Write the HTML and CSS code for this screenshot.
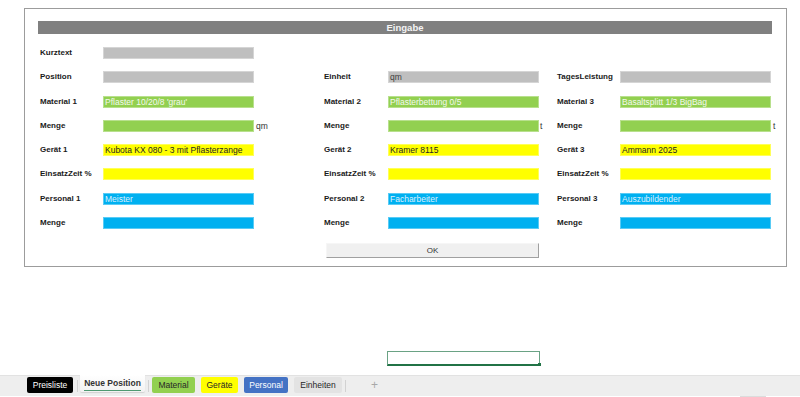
FILE: index.html
```html
<!DOCTYPE html>
<html lang="de">
<head>
<meta charset="utf-8">
<title>Eingabe</title>
<link rel="stylesheet" href="styles.css">
</head>
<body>
<div class="sheet">
  <div class="frame">
    <div class="titlebar">Eingabe</div>
    <div class="form">
      <div class="lbl">Kurztext</div><div class="fld gray"></div><div></div><div></div><div></div><div></div><div></div><div></div><div></div>

      <div class="lbl">Position</div><div class="fld gray"></div><div></div>
      <div class="lbl">Einheit</div><div class="fld gray dark">qm</div><div></div>
      <div class="lbl">TagesLeistung</div><div class="fld gray"></div><div></div>

      <div class="lbl">Material 1</div><div class="fld green">Pflaster 10/20/8 'grau'</div><div></div>
      <div class="lbl">Material 2</div><div class="fld green">Pflasterbettung 0/5</div><div></div>
      <div class="lbl">Material 3</div><div class="fld green">Basaltsplitt 1/3 BigBag</div><div></div>

      <div class="lbl">Menge</div><div class="fld green"></div><div class="unit">qm</div>
      <div class="lbl">Menge</div><div class="fld green"></div><div class="unit u1">t</div>
      <div class="lbl">Menge</div><div class="fld green"></div><div class="unit u2">t</div>

      <div class="lbl">Gerät 1</div><div class="fld yellow">Kubota KX 080 - 3 mit Pflasterzange</div><div></div>
      <div class="lbl">Gerät 2</div><div class="fld yellow">Kramer 8115</div><div></div>
      <div class="lbl">Gerät 3</div><div class="fld yellow">Ammann 2025</div><div></div>

      <div class="lbl">EinsatzZeit %</div><div class="fld yellow"></div><div></div>
      <div class="lbl">EinsatzZeit %</div><div class="fld yellow"></div><div></div>
      <div class="lbl">EinsatzZeit %</div><div class="fld yellow"></div><div></div>

      <div class="lbl">Personal 1</div><div class="fld blue">Meister</div><div></div>
      <div class="lbl">Personal 2</div><div class="fld blue">Facharbeiter</div><div></div>
      <div class="lbl">Personal 3</div><div class="fld blue">Auszubildender</div><div></div>

      <div class="lbl">Menge</div><div class="fld blue"></div><div></div>
      <div class="lbl">Menge</div><div class="fld blue"></div><div></div>
      <div class="lbl">Menge</div><div class="fld blue"></div><div></div>
    </div>
    <div class="btn">OK</div>
  </div>
  <div class="cell"><span class="handle"></span></div>
</div>
<div class="tabbar">
  <div class="tab t-black">Preisliste</div>
  <div class="sep"></div>
  <div class="tab t-active">Neue Position</div>
  <div class="sep"></div>
  <div class="tab t-green">Material</div>
  <div class="tab t-yellow">Geräte</div>
  <div class="tab t-blue">Personal</div>
  <div class="tab t-gray">Einheiten</div>
  <div class="sep"></div>
  <div class="plus">+</div>
</div>
<div class="bottom"><div class="thumb"></div></div>
</body>
</html>
```

FILE: styles.css
```css
* { box-sizing: border-box; }
html, body { margin: 0; padding: 0; background: #ffffff; }
body {
  width: 800px;
  height: 397px;
  overflow: hidden;
  font-family: "Liberation Sans", Arial, sans-serif;
}
.sheet {
  height: 375px;
  padding-top: 8px;
}
.frame {
  margin-left: 24px;
  width: 763px;
  border: 1px solid #9c9c9c;
  padding: 12px 0 8px 0;
}
.titlebar {
  margin-left: 13px;
  width: 734px;
  height: 13px;
  background: #808080;
  color: #f4f4f4;
  font-weight: bold;
  font-size: 9.5px;
  line-height: 13px;
  text-align: center;
}
.form {
  margin: 13px 0 0 15px;
  display: grid;
  grid-template-columns: 63px 151px 70px 64px 151px 18px 63px 151px 15px;
  grid-auto-rows: 12px;
  row-gap: 12.3px;
}
.lbl {
  font-weight: bold;
  font-size: 8px;
  line-height: 12px;
  color: #1a1a1a;
  white-space: nowrap;
}
.fld {
  height: 12px;
  font-size: 8.5px;
  line-height: 12px;
  padding-left: 2px;
  white-space: nowrap;
  overflow: hidden;
  box-shadow: inset 0 0 0 1px rgba(255,255,255,0.35);
}
.gray { background: #bfbfbf; }
.dark { color: #404040; }
.green { background: #92d050; color: #f4f8ee; }
.yellow { background: #ffff00; color: #262626; }
.blue { background: #00b0f0; color: #dcefff; }
.unit {
  font-size: 8.5px;
  line-height: 13px;
  color: #333333;
  padding-left: 2px;
}
.u1 { padding-left: 1px; }
.u2 { padding-left: 2px; }
.btn {
  margin: 14px 0 0 301px;
  width: 213px;
  height: 15px;
  background: #f0f0f0;
  border-top: 1px solid #f6f6f6;
  border-left: 1px solid #f6f6f6;
  border-right: 1px solid #a0a0a0;
  border-bottom: 1px solid #a0a0a0;
  font-size: 8px;
  line-height: 13px;
  text-align: center;
  color: #333333;
}
.cell {
  margin: 84px 0 0 387px;
  width: 153px;
  height: 15px;
  border: 1px solid #6aa284;
  border-bottom: 2px solid #217346;
  display: flex;
  justify-content: flex-end;
  align-items: flex-end;
}
.handle {
  width: 3px;
  height: 3px;
  background: #217346;
  margin: 0 -2px -2px 0;
}
.tabbar {
  height: 21px;
  background: #eeeeee;
  border-top: 1px solid #e2e2e2;
  display: flex;
  align-items: flex-start;
  padding-left: 27px;
  font-size: 8.5px;
}
.tab {
  height: 16px;
  margin-top: 1px;
  line-height: 16px;
  text-align: center;
  border-radius: 2px;
  white-space: nowrap;
  color: #262626;
}
.t-black { width: 46px; background: #000000; color: #ffffff; }
.t-active {
  width: 65px;
  height: 17px;
  margin-top: -1px;
  background: linear-gradient(#ffffff, #f2f2f2);
  box-shadow: 0 1px 1px rgba(0,0,0,0.12);
  font-weight: bold;
  color: #333333;
  position: relative;
  line-height: 16px;
  border-radius: 0 0 2px 2px;
}
.t-active::after {
  content: "";
  position: absolute;
  left: 4px;
  right: 4px;
  bottom: 1px;
  height: 1px;
  background: #4f9a72;
}
.t-green { width: 43px; background: #92d050; margin-left: 0; }
.t-yellow { width: 37px; background: #ffff00; margin-left: 6px; }
.t-blue { width: 44px; background: #4472c4; color: #ffffff; margin-left: 6px; }
.t-gray { width: 48px; background: #e3e3e3; margin-left: 6px; }
.sep {
  width: 1px;
  height: 12px;
  margin: 4px 3px 0 3px;
  background: #d2d2d2;
}
.t-black + .sep { margin: 4px 2px 0 4px; }
.t-active + .sep { margin: 4px 3px 0 3px; }
.plus {
  margin-left: 22px;
  color: #a8a8a8;
  font-size: 12px;
  line-height: 18px;
}
.bottom {
  height: 1px;
  position: relative;
}
.thumb {
  margin-left: 740px;
  width: 26px;
  height: 1px;
  background: #dcdcdc;
}
```
